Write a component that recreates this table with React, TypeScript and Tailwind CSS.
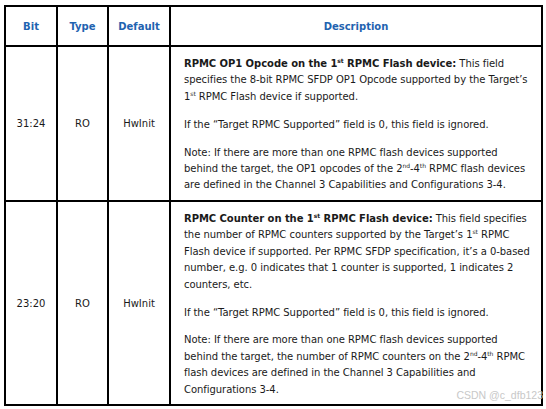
import React from 'react'

const Sup = ({ children }: { children: string }) => (
  <span className="relative -top-[4px] text-[6px] leading-none">{children}</span>
)

// each paragraph is a list of lines, broken where the reference breaks them
const Para = ({ lines, last }: { lines: React.ReactNode[]; last?: boolean }) => (
  <p className={last ? '' : 'mb-[11.5px]'}>
    {lines.map((l, i) => (
      <span key={i} className="block whitespace-nowrap">
        {l}
      </span>
    ))}
  </p>
)

const ignored = ['If the “Target RPMC Supported” field is 0, this field is ignored.']

const rows = [
  {
    bit: '31:24',
    type: 'RO',
    def: 'HwInit',
    height: 'h-[155px]',
    paras: [
      [
        <>
          <b>
            RPMC OP1 Opcode on the 1<Sup>st</Sup> RPMC Flash device:
          </b>{' '}
          This field
        </>,
        'specifies the 8-bit RPMC SFDP OP1 Opcode supported by the Target’s',
        <>
          1<Sup>st</Sup> RPMC Flash device if supported.
        </>,
      ],
      ignored,
      [
        'Note: If there are more than one RPMC flash devices supported',
        <>
          behind the target, the OP1 opcodes of the 2<Sup>nd</Sup>-4<Sup>th</Sup> RPMC flash devices
        </>,
        'are defined in the Channel 3 Capabilities and Configurations 3-4.',
      ],
    ],
  },
  {
    bit: '23:20',
    type: 'RO',
    def: 'HwInit',
    height: 'h-[204px]',
    paras: [
      [
        <>
          <b>
            RPMC Counter on the 1<Sup>st</Sup> RPMC Flash device:
          </b>{' '}
          This field specifies
        </>,
        <>
          the number of RPMC counters supported by the Target’s 1<Sup>st</Sup> RPMC
        </>,
        'Flash device if supported. Per RPMC SFDP specification, it’s a 0-based',
        'number, e.g. 0 indicates that 1 counter is supported, 1 indicates 2',
        'counters, etc.',
      ],
      ignored,
      [
        'Note: If there are more than one RPMC flash devices supported',
        <>
          behind the target, the number of RPMC counters on the 2<Sup>nd</Sup>-4<Sup>th</Sup> RPMC
        </>,
        'flash devices are defined in the Channel 3 Capabilities and',
        'Configurations 3-4.',
      ],
    ],
  },
]

export default function App() {
  return (
    <div className="w-[546px] h-[409px] bg-white pl-[4px] pt-[5px] font-['DejaVu_Sans',sans-serif] text-[10px] text-[#1a1a1a]">
      <div className="relative w-[539px]">
        <table className="w-full border-collapse border-2 border-black table-fixed">
          <colgroup>
            <col className="w-[52px]" />
            <col className="w-[51px]" />
            <col className="w-[62px]" />
            <col />
          </colgroup>
          <thead>
            <tr className="h-[40px] text-[#1f63b0] font-bold">
              <th className="border-2 border-black">Bit</th>
              <th className="border-2 border-black">Type</th>
              <th className="border-2 border-black">Default</th>
              <th className="border-2 border-black">Description</th>
            </tr>
          </thead>
          <tbody>
            {rows.map((r) => (
              <tr key={r.bit} className={r.height}>
                <td className="border-2 border-black text-center align-middle">{r.bit}</td>
                <td className="border-2 border-black text-center align-middle">{r.type}</td>
                <td className="border-2 border-black text-center align-middle">{r.def}</td>
                <td className="border-2 border-black pl-[13px] pr-[6px] pt-[9px] pb-[6px] align-top leading-[16.4px] tracking-[-0.05px]">
                  {r.paras.map((p, i) => (
                    <Para key={i} lines={p} last={i === r.paras.length - 1} />
                  ))}
                </td>
              </tr>
            ))}
          </tbody>
        </table>
        <span className="absolute right-[0px] bottom-[6px] text-[10.5px] leading-none text-[#c8c8c8] font-['Liberation_Sans',sans-serif]">
          CSDN @c_dfb123
        </span>
      </div>
    </div>
  )
}
